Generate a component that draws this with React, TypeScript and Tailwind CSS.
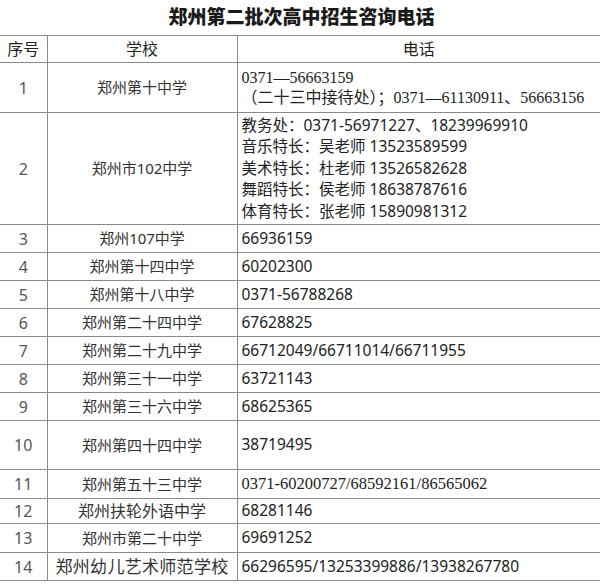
const sans = "font-['Noto_Sans','Noto_Sans_CJK_SC',sans-serif]"

type Row = {
  no: number
  school: string
  phones: string[]
  h: string
  serif?: string
  schoolSize?: string
}

const rows: Row[] = [
  {
    no: 1,
    school: "郑州第十中学",
    phones: ["0371—56663159", "（二十三中接待处）；0371—61130911、56663156"],
    h: "h-[50px]",
    serif: "text-[16px] leading-[20px]",
  },
  {
    no: 2,
    school: "郑州市102中学",
    phones: [
      "教务处：0371-56971227、18239969910",
      "音乐特长：吴老师 13523589599",
      "美术特长：杜老师 13526582628",
      "舞蹈特长：侯老师 18638787616",
      "体育特长：张老师 15890981312",
    ],
    h: "h-[112px]",
  },
  { no: 3, school: "郑州107中学", phones: ["66936159"], h: "h-[28px]" },
  { no: 4, school: "郑州第十四中学", phones: ["60202300"], h: "h-[28px]" },
  { no: 5, school: "郑州第十八中学", phones: ["0371-56788268"], h: "h-[28px]" },
  { no: 6, school: "郑州第二十四中学", phones: ["67628825"], h: "h-[28px]" },
  { no: 7, school: "郑州第二十九中学", phones: ["66712049/66711014/66711955"], h: "h-[28px]" },
  { no: 8, school: "郑州第三十一中学", phones: ["63721143"], h: "h-[28px]" },
  { no: 9, school: "郑州第三十六中学", phones: ["68625365"], h: "h-[28px]" },
  { no: 10, school: "郑州第四十四中学", phones: ["38719495"], h: "h-[49px]" },
  {
    no: 11,
    school: "郑州第五十三中学",
    phones: ["0371-60200727/68592161/86565062"],
    h: "h-[29px]",
    serif: "text-[16.5px] leading-[22px]",
  },
  {
    no: 12,
    school: "郑州扶轮外语中学",
    phones: ["68281146"],
    h: "h-[24px]",
    schoolSize: "text-[16px]",
  },
  { no: 13, school: "郑州市第二十中学", phones: ["69691252"], h: "h-[29px]" },
  {
    no: 14,
    school: "郑州幼儿艺术师范学校",
    phones: ["66296595/13253399886/13938267780"],
    h: "h-[28px]",
    schoolSize: "text-[17px] tracking-[0.3px]",
  },
]

export default function App() {
  return (
    <div className={`h-[588px] w-[600px] bg-white ${sans}`}>
      <div className="flex h-[35px] items-center justify-center pl-[3px]">
        <h1 className="text-[19px] font-black text-[#1a1a1a]">郑州第二批次高中招生咨询电话</h1>
      </div>
      <table className="w-full table-fixed border-collapse">
        <colgroup>
          <col className="w-[47px]" />
          <col className="w-[190px]" />
          <col />
        </colgroup>
        <thead>
          <tr className="h-[27px] border-y border-[#8a8a8a] text-[16px] text-[#222]">
            <th className="text-center font-normal">序号</th>
            <th className="border-l border-[#8a8a8a] text-center font-normal">学校</th>
            <th className="border-l border-[#8a8a8a] text-center font-normal">电话</th>
          </tr>
        </thead>
        <tbody>
          {rows.map((row) => (
            <tr key={row.no} className={`${row.h} border-b border-[#8a8a8a]`}>
              <td className="text-center text-[16px] text-[#555]">{row.no}</td>
              <td
                className={`border-l border-[#8a8a8a] whitespace-nowrap text-center text-[#333] ${
                  row.schoolSize ?? "text-[15px]"
                }`}
              >
                {row.school}
              </td>
              <td
                className={`border-l border-[#8a8a8a] px-[4px] text-[#222] ${
                  row.serif
                    ? `font-['Liberation_Serif','Noto_Sans_CJK_SC',serif] ${row.serif}`
                    : "text-[15.5px] leading-[21.5px]"
                }`}
              >
                {row.phones.map((p) => (
                  <div key={p} className="whitespace-nowrap">
                    {p}
                  </div>
                ))}
              </td>
            </tr>
          ))}
        </tbody>
      </table>
    </div>
  )
}
